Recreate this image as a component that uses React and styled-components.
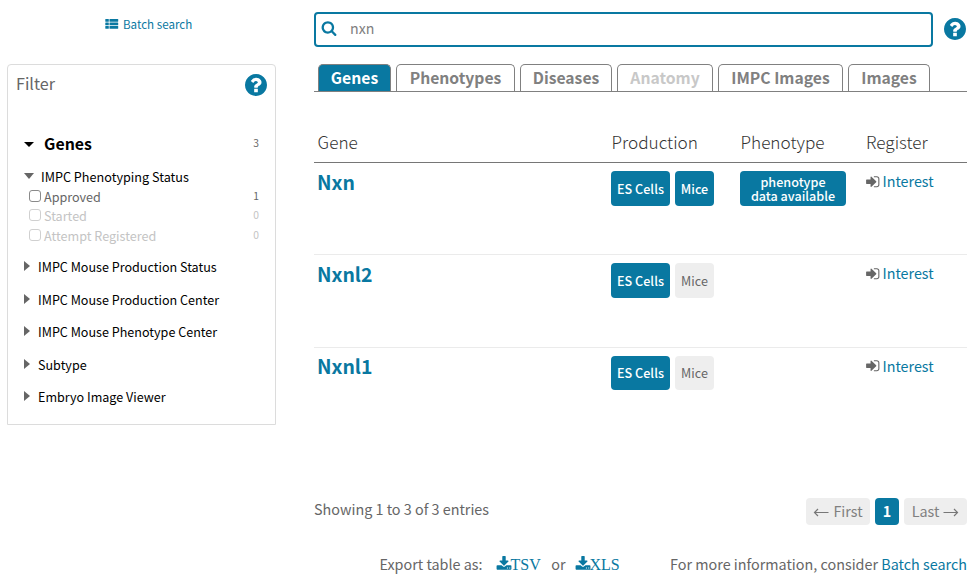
import React from 'react';
import styled, { createGlobalStyle, css } from 'styled-components';

const BLUE = '#0978a1';
const GREY = '#666';

const GlobalStyle = createGlobalStyle`
  * { box-sizing: border-box; }
  body {
    margin: 0;
    background: #fff;
    color: ${GREY};
    font-family: "Noto Sans CJK SC", "Open Sans", sans-serif;
    font-size: 14.36px;
    line-height: 20px;
  }
`;

const Page = styled.div`
  display: flex;
  align-items: flex-start;
  width: 978px;
  height: 586px;
  overflow: hidden;
`;

const Glyph = styled.svg`
  display: block;
  flex: none;
  width: ${(p) => p.$size}px;
  height: ${(p) => p.$size}px;
  fill: ${(p) => p.$color || BLUE};
`;

/* Sidebar */

const Sidebar = styled.aside`
  width: 269px;
  margin-left: 7px;
  flex: none;
`;

const BatchLink = styled.a`
  display: flex;
  align-items: center;
  gap: 4px;
  height: 20px;
  margin: 14px 0 30px 98px;
  color: ${BLUE};
  font-size: 11.6px;
`;

const FilterPanel = styled.section`
  height: 361px;
  padding: 8px 8px 0 8px;
  border: 1px solid #dcdcdc;
  border-radius: 4px 4px 0 0;
`;

const FilterHead = styled.header`
  display: flex;
  justify-content: space-between;
  height: 60px;
  font-size: 16.15px;

  svg {
    margin-top: 1px;
  }
`;

const FilterTitle = styled.div`
  display: flex;
  align-items: center;
  height: 22px;
  padding: 0 8px;
  color: #000;
  font-size: 15.9px;
  font-weight: 700;
`;

const Count = styled.span`
  margin-left: auto;
  padding-bottom: 2px;
  color: ${(p) => (p.$muted ? '#c4c4c4' : GREY)};
  font-size: 10.3px;
  font-weight: 400;
`;

const Caret = styled.span`
  flex: none;
  width: 0;
  height: 0;
  ${(p) =>
    p.$open
      ? css`
          border: 5px solid transparent;
          border-top: ${p.$tall || 5}px solid ${p.$color || GREY};
          border-bottom: 0;
          margin-right: ${p.$gap || 7}px;
          margin-bottom: ${p.$tall ? 2 : 0}px;
        `
      : css`
          border: 5px solid transparent;
          border-left: 6px solid ${GREY};
          border-right: 0;
          margin: 0 8px 2px 0;
        `}
`;

const FacetTitle = styled.div`
  display: flex;
  align-items: center;
  height: 20px;
  padding-left: 8px;
  margin-top: ${(p) => p.$top}px;
  color: #000;
  font-size: ${(p) => p.$size || 12.57}px;
`;

const Option = styled.label`
  display: flex;
  align-items: center;
  height: 19.5px;
  padding: 0 8px 0 12px;
  color: ${(p) => (p.$muted ? '#c4c4c4' : GREY)};
  font-size: 12.6px;
`;

const Box = styled.span`
  width: 12px;
  height: 12px;
  margin: 0 3px 2px 1px;
  border: 1px solid ${(p) => (p.$muted ? '#d0d0d0' : '#8a8a8a')};
  border-radius: 3px;
  background: #fff;
`;

/* Main column */

const Main = styled.main`
  width: 653px;
  margin-left: 38px;
  flex: none;
`;

const SearchRow = styled.div`
  display: flex;
  align-items: flex-start;
  gap: 11px;
  margin-top: 12px;

  > svg {
    margin-top: 6px;
  }
`;

const SearchBox = styled.div`
  display: flex;
  align-items: center;
  gap: 13px;
  width: 619px;
  height: 35px;
  padding: 0 0 3px 5px;
  border: 2px solid ${BLUE};
  border-radius: 4px;
  color: #808080;
  font-size: 14.2px;
`;

const Tabs = styled.nav`
  display: flex;
  gap: 5px;
  height: 28px;
  margin-top: 17px;
  padding-left: 4px;
  border-bottom: 1px solid #808080;
`;

const Tab = styled.a`
  width: ${(p) => p.$w}px;
  height: 27px;
  border: 1px solid #808080;
  border-bottom: 0;
  border-radius: 5px 5px 0 0;
  background: ${(p) => (p.$active ? BLUE : '#fff')};
  color: ${(p) => (p.$active ? '#fff' : p.$muted ? '#c8c8c8' : '#808080')};
  font-size: 15.7px;
  font-weight: 700;
  line-height: 26px;
  text-align: center;
  white-space: nowrap;
`;

const columns = css`
  display: grid;
  grid-template-columns: 297px 129px 125px 102px;
`;

const TableHead = styled.div`
  ${columns}
  height: 71px;
  padding-top: 40px;
  border-bottom: 1px solid #767676;
  color: #333;
  font-size: 17.2px;
  font-weight: 300;
  line-height: 20px;
`;

const HeadCell = styled.span`
  padding-left: ${(p) => p.$pad}px;
`;

const GeneRow = styled.div`
  ${columns}
  height: ${(p) => p.$h}px;
  padding-top: 8px;
  border-bottom: 1px solid ${(p) => (p.$last ? 'transparent' : '#ebebeb')};
`;

const GeneName = styled.a`
  padding-left: 3px;
  color: ${BLUE};
  font-size: 19.4px;
  font-weight: 700;
  line-height: ${(p) => (p.$last ? 20 : 22)}px;
`;

const Badges = styled.div`
  display: flex;
  gap: 5px;
`;

const Badge = styled.span`
  display: flex;
  flex-direction: column;
  align-items: center;
  justify-content: center;
  width: ${(p) => p.$w}px;
  height: ${(p) => p.$h || 35}px;
  border-radius: 4px;
  background: ${(p) => (p.$off ? '#eee' : BLUE)};
  color: ${(p) => (p.$off ? GREY : '#fff')};
  font-size: 12.6px;
  font-weight: ${(p) => (p.$off ? 400 : 500)};
  line-height: 14px;
  text-align: center;
  white-space: nowrap;
`;

const Register = styled.a`
  display: flex;
  align-items: center;
  gap: 2px;
  height: ${(p) => (p.$last ? 19 : 20)}px;
  color: ${BLUE};
  font-size: 14.3px;

  svg {
    margin-top: 1px;
  }
`;

const Footer = styled.div`
  display: flex;
  align-items: center;
  justify-content: space-between;
  height: 27px;
  margin-top: 58px;
`;

const Summary = styled.span`
  padding-bottom: 6px;
`;

const Pager = styled.div`
  display: flex;
  gap: 5px;
`;

const PageButton = styled.span`
  display: flex;
  align-items: center;
  justify-content: center;
  gap: 4px;
  width: ${(p) => p.$w}px;
  height: 27px;
  padding-bottom: 1px;
  border-radius: 4px;
  background: ${(p) => (p.$active ? BLUE : '#eee')};
  color: ${(p) => (p.$active ? '#fff' : '#808080')};
  font-weight: ${(p) => (p.$active ? 700 : 400)};
`;

const Arrow = styled.svg`
  width: 16px;
  height: 9px;
  margin-top: 3px;
  fill: none;
  stroke: #777;
  stroke-width: 1.2;
`;

const ExportRow = styled.div`
  display: flex;
  align-items: center;
  height: 24px;
  margin-top: 27px;
  padding-left: 65.5px;
  white-space: nowrap;
`;

const ExportLink = styled.a`
  display: flex;
  align-items: center;
  color: ${BLUE};
  font-family: "Liberation Serif", serif;
  font-size: 16px;
  margin: 0 ${(p) => p.$right}px 0 ${(p) => p.$left}px;

  svg {
    margin-right: -1px;
  }
`;

const ExportLabel = styled.span`
  padding-top: 2px;
`;

const MoreInfo = styled.span`
  margin-left: auto;
`;

const Link = styled.a`
  color: ${BLUE};
`;

const paths = {
  search:
    'M1216 832q0-185-131.5-316.5t-316.5-131.5-316.5 131.5-131.5 316.5 131.5 316.5 316.5 131.5 316.5-131.5 131.5-316.5zm512 832q0 52-38 90t-90 38q-54 0-90-38l-343-342q-179 124-399 124-143 0-273.5-55.5t-225-150-150-225-55.5-273.5 55.5-273.5 150-225 225-150 273.5-55.5 273.5 55.5 225 150 150 225 55.5 273.5q0 220-124 399l343 343q37 37 37 90z',
  help:
    'M1024 1376v-192q0-14-9-23t-23-9h-192q-14 0-23 9t-9 23v192q0 14 9 23t23 9h192q14 0 23-9t9-23zm256-672q0-88-55.5-163t-138.5-116-170-41q-243 0-371 213-15 24 8 42l132 100q7 6 19 6 16 0 25-12 53-68 86-92 34-24 86-24 48 0 85.5 26t37.5 59q0 38-20 61t-68 45q-63 28-115.5 86.5t-52.5 125.5v36q0 14 9 23t23 9h192q14 0 23-9t9-23q0-19 21.5-49.5t54.5-49.5q32-18 49-28.5t46-35 44.5-48 28-60.5 12.5-81zm384 192q0 209-103 385.5t-279.5 279.5-385.5 103-385.5-103-279.5-279.5-103-385.5 103-385.5 279.5-279.5 385.5-103 385.5 103 279.5 279.5 103 385.5z',
  download:
    'M1344 1344q0-26-19-45t-45-19-45 19-19 45 19 45 45 19 45-19 19-45zm256 0q0-26-19-45t-45-19-45 19-19 45 19 45 45 19 45-19 19-45zm128-224v320q0 40-28 68t-68 28h-1472q-40 0-68-28t-28-68v-320q0-40 28-68t68-28h465l135 136q58 56 136 56t136-56l136-136h464q40 0 68 28t28 68zm-325-569q17 41-14 70l-448 448q-18 19-45 19t-45-19l-448-448q-31-29-14-70 17-39 59-39h256v-448q0-26 19-45t45-19h256q26 0 45 19t19 45v448h256q42 0 59 39z',
  signIn:
    'M1312 896q0 26-19 45l-544 544q-19 19-45 19t-45-19-19-45v-288h-448q-26 0-45-19t-19-45v-384q0-26 19-45t45-19h448v-288q0-26 19-45t45-19 45 19l544 544q19 19 19 45zm352-352v704q0 119-84.5 203.5t-203.5 84.5h-320q-13 0-22.5-9.5t-9.5-22.5q0-4-1-20t-.5-26.5 3-23.5 10-19.5 20.5-6.5h320q66 0 113-47t47-113v-704q0-66-47-113t-113-47h-312l-11.5-1-11.5-3-8-5.5-7-9-2-13.5q0-4-1-20t-.5-26.5 3-23.5 10-19.5 20.5-6.5h320q119 0 203.5 84.5t84.5 203.5z',
};

const Icon = ({ name, size, color, box = '0 0 1792 1792' }) => (
  <Glyph viewBox={box} $size={size} $color={color}>
    <path d={paths[name]} />
  </Glyph>
);

const HELP_BOX = '128 128 1536 1536';

const ListIcon = () => (
  <Glyph viewBox="0 0 14 14" $size={14}>
    {[2, 5.5, 9].map((y) => (
      <React.Fragment key={y}>
        <rect x="0.3" y={y} width="3.5" height="2.8" rx="0.5" />
        <rect x="4.5" y={y} width="8.7" height="2.8" rx="0.5" />
      </React.Fragment>
    ))}
  </Glyph>
);

const tabs = [
  { label: 'Genes', w: 73, active: true },
  { label: 'Phenotypes', w: 119 },
  { label: 'Diseases', w: 92 },
  { label: 'Anatomy', w: 96, muted: true },
  { label: 'IMPC Images', w: 125 },
  { label: 'Images', w: 82 },
];

const options = [
  { label: 'Approved', count: 1 },
  { label: 'Started', count: 0 },
  { label: 'Attempt Registered', count: 0 },
];

const facets = [
  { label: 'IMPC Mouse Production Status', top: 11.5 },
  { label: 'IMPC Mouse Production Center', top: 13 },
  { label: 'IMPC Mouse Phenotype Center', top: 12 },
  { label: 'Subtype', top: 13 },
  { label: 'Embryo Image Viewer', top: 12 },
];

const genes = [
  { name: 'Nxn', h: 92, mice: true, phenotype: true },
  { name: 'Nxnl2', h: 93 },
  { name: 'Nxnl1', h: 92, badgeH: 34, last: true },
];

export default function App() {
  return (
    <Page>
      <GlobalStyle />
      <Sidebar>
        <BatchLink>
          <ListIcon />
          Batch search
        </BatchLink>
        <FilterPanel>
          <FilterHead>
            <span>Filter</span>
            <Icon name="help" size={22} box={HELP_BOX} />
          </FilterHead>
          <FilterTitle>
            <Caret $open $color="#000" $gap={10} />
            Genes
            <Count>3</Count>
          </FilterTitle>
          <FacetTitle $top={12} $size={12.65}>
            <Caret $open $tall={6} />
            IMPC Phenotyping Status
          </FacetTitle>
          {options.map((o) => (
            <Option key={o.label} $muted={!o.count}>
              <Box $muted={!o.count} />
              {o.label}
              <Count $muted={!o.count}>{o.count}</Count>
            </Option>
          ))}
          {facets.map((f) => (
            <FacetTitle key={f.label} $top={f.top}>
              <Caret />
              {f.label}
            </FacetTitle>
          ))}
        </FilterPanel>
      </Sidebar>

      <Main>
        <SearchRow>
          <SearchBox>
            <Icon name="search" size={16} />
            nxn
          </SearchBox>
          <Icon name="help" size={22} box={HELP_BOX} />
        </SearchRow>

        <Tabs>
          {tabs.map((t) => (
            <Tab key={t.label} $w={t.w} $active={t.active} $muted={t.muted}>
              {t.label}
            </Tab>
          ))}
        </Tabs>

        <TableHead>
          <HeadCell $pad={3.6}>Gene</HeadCell>
          <HeadCell $pad={0.5}>Production</HeadCell>
          <HeadCell $pad={0.5}>Phenotype</HeadCell>
          <HeadCell $pad={1}>Register</HeadCell>
        </TableHead>
        {genes.map((g) => (
          <GeneRow key={g.name} $h={g.h} $last={g.last}>
            <GeneName $last={g.last}>{g.name}</GeneName>
            <Badges>
              <Badge $w={59} $h={g.badgeH}>ES Cells</Badge>
              <Badge $w={39} $h={g.badgeH} $off={!g.mice}>Mice</Badge>
            </Badges>
            <Badges>
              {g.phenotype && (
                <Badge $w={106}>
                  <span>phenotype</span>
                  <span>data available</span>
                </Badge>
              )}
            </Badges>
            <Register $last={g.last}>
              <Icon name="signIn" size={15.5} color={GREY} />
              Interest
            </Register>
          </GeneRow>
        ))}

        <Footer>
          <Summary>Showing 1 to 3 of 3 entries</Summary>
          <Pager>
            <PageButton $w={64}>
              <Arrow viewBox="0 0 16 9">
                <path d="M15.5 4.5H1.5M5 1L1.5 4.5L5 8" />
              </Arrow>
              First
            </PageButton>
            <PageButton $w={24} $active>1</PageButton>
            <PageButton $w={63}>
              Last
              <Arrow viewBox="0 0 16 9">
                <path d="M0.5 4.5H14.5M11 1L14.5 4.5L11 8" />
              </Arrow>
            </PageButton>
          </Pager>
        </Footer>

        <ExportRow>
          Export table as:
          <ExportLink $left={13} $right={10.5}>
            <Icon name="download" size={16} />
            <ExportLabel>TSV</ExportLabel>
          </ExportLink>
          or
          <ExportLink $left={9} $right={0}>
            <Icon name="download" size={16} />
            <ExportLabel>XLS</ExportLabel>
          </ExportLink>
          <MoreInfo>
            For more information, consider <Link>Batch search</Link>
          </MoreInfo>
        </ExportRow>
      </Main>
    </Page>
  );
}
